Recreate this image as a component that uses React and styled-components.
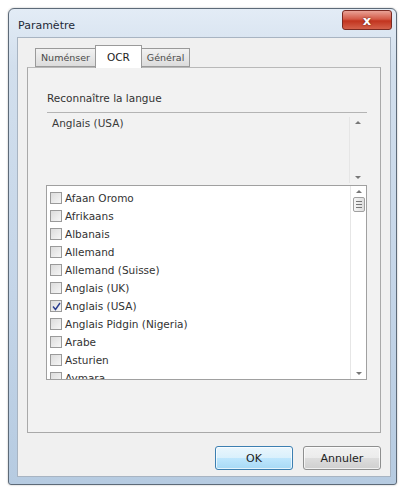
import React from 'react'
import styled, { createGlobalStyle } from 'styled-components'

const Global = createGlobalStyle`
  html, body { margin: 0; padding: 0; background: #ffffff; }
  body { font-family: Tahoma, "DejaVu Sans", "Liberation Sans", sans-serif; }
  * { box-sizing: border-box; }
`;

const languages = [
  { name: 'Afaan Oromo' },
  { name: 'Afrikaans' },
  { name: 'Albanais' },
  { name: 'Allemand' },
  { name: 'Allemand (Suisse)' },
  { name: 'Anglais (UK)' },
  { name: 'Anglais (USA)', checked: true },
  { name: 'Anglais Pidgin (Nigeria)' },
  { name: 'Arabe' },
  { name: 'Asturien' },
  { name: 'Aymara' },
];

const Page = styled.div`
  width: 404px;
  height: 490px;
  padding: 8px 7px 5px 8px;
  background: #fff;
`;

const Window = styled.div`
  height: 100%;
  display: flex;
  flex-direction: column;
  border: 1px solid #5d6a78;
  border-radius: 6px 6px 3px 3px;
  background: linear-gradient(180deg, #e3ecf6 0%, #d2dfed 12%, #c4d5e8 60%, #b6cbe1 100%);
  padding: 0 5px 7px 8px;
  box-shadow: 0 0 2px rgba(0, 0, 0, 0.3);
`;

const TitleBar = styled.div`
  height: 33px;
  display: flex;
  align-items: center;
  justify-content: space-between;
  padding-left: 1px;
`;

const Title = styled.span`
  font-size: 11px;
  color: #1e2a38;
  margin-top: 5px;
`;

const CloseBtn = styled.div`
  align-self: flex-start;
  width: 50px;
  height: 20px;
  margin-top: 1px;
  margin-right: -1px;
  border: 1px solid #7a2a22;
  border-radius: 3px;
  background: linear-gradient(180deg, #e9a296 0%, #d45a47 45%, #c2341f 55%, #d4614b 100%);
  display: flex;
  align-items: center;
  justify-content: center;
  color: #fff;
  font: bold 13px "DejaVu Sans", sans-serif;
  text-shadow: 0 0 2px #5a1a10;
`;

const Client = styled.div`
  flex: 1;
  display: flex;
  flex-direction: column;
  background: #f0f0f0;
  border: 1px solid #a8b4c2;
  padding: 6px 9px 6px 9px;
`;

const Tabs = styled.div`
  display: flex;
  align-items: flex-end;
  padding-left: 8px;
  height: 23px;
`;

const Tab = styled.div`
  height: ${p => (p.$active ? '23px' : '19px')};
  padding: 0 ${p => (p.$active ? '11px' : '5px')};
  font-size: ${p => (p.$active ? '10.5px' : '9.5px')};
  display: flex;
  align-items: center;
  color: ${p => (p.$active ? '#222' : '#4a4a4a')};
  background: ${p => (p.$active ? '#ffffff' : 'linear-gradient(180deg, #f2f2f2, #dcdcdc)')};
  border: 1px solid #9a9a9a;
  border-bottom: ${p => (p.$active ? 'none' : '1px solid #9a9a9a')};
  margin-bottom: ${p => (p.$active ? '-1px' : '0')};
  position: relative;
  z-index: ${p => (p.$active ? 2 : 1)};
  & + & { margin-left: -1px; }
`;

const Panel = styled.div`
  height: 366px;
  border: 1px solid #a9a9a9;
  border-top-color: #b9b9b9;
  background: #f2f2f2;
  padding: 24px 13px 0 19px;
`;

const Label = styled.div`
  font-size: 10.5px;
  color: #333;
  margin-bottom: 8px;
`;

const Selected = styled.div`
  height: 73px;
  border-top: 1px solid #b4b4b4;
  display: flex;
  justify-content: space-between;
  padding: 4px 2px 0 5px;
  font-size: 10.5px;
  color: #3a3a3a;
`;

const ScrollBar = styled.div`
  width: 16px;
  display: flex;
  flex-direction: column;
  justify-content: space-between;
  align-items: center;
  padding: 4px 0 4px;
  border-left: 1px solid #e6e6e6;
  margin-bottom: ${p => (p.$inset ? '0' : '2px')};
`;

const ArrowCol = styled.div`
  display: flex;
  flex-direction: column;
  align-items: center;
`;

const Arrow = styled.span`
  width: 0;
  height: 0;
  border-left: 3px solid transparent;
  border-right: 3px solid transparent;
  ${p => (p.$down ? 'border-top: 3px solid #777;' : 'border-bottom: 3px solid #777;')}
`;

const Thumb = styled.div`
  width: 12px;
  height: 15px;
  border: 1px solid #a0a0a0;
  border-radius: 2px;
  background: linear-gradient(90deg, #f6f6f6, #dedede);
  display: flex;
  flex-direction: column;
  justify-content: center;
  align-items: center;
  gap: 2px;
  margin-top: 4px;
  & > i { display: block; width: 6px; height: 1px; background: #777; }
`;

const ListBox = styled.div`
  height: 195px;
  margin-left: -1px;
  background: #fff;
  border: 1px solid #a0a0a0;
  display: flex;
  overflow: hidden;
`;

const Items = styled.div`
  flex: 1;
  padding: 3px 0 0 3px;
`;

const Item = styled.div`
  height: 18px;
  display: flex;
  align-items: center;
  gap: 3px;
  font-size: 10.5px;
  color: #333;
`;

const Check = styled.span`
  width: 12px;
  height: 12px;
  border: 1px solid #9a9a9a;
  background: linear-gradient(135deg, #dcdcdc, #f6f6f6);
  display: flex;
  align-items: center;
  justify-content: center;
`;

const Footer = styled.div`
  display: flex;
  justify-content: flex-end;
  gap: 10px;
  padding: 13px 0 0;
`;

const Button = styled.div`
  width: 78px;
  height: 24px;
  border: 1px solid ${p => (p.$default ? '#3c7fb1' : '#8e8f8f')};
  border-radius: 3px;
  background: ${p => (p.$default
    ? 'linear-gradient(180deg, #eaf6fd 0%, #d9f0fc 50%, #bee6fd 51%, #a7d9f5 100%)'
    : 'linear-gradient(180deg, #f2f2f2 0%, #ebebeb 50%, #dddddd 51%, #cfcfcf 100%)')};
  box-shadow: inset 0 0 0 1px rgba(255,255,255,0.7);
  display: flex;
  align-items: center;
  justify-content: center;
  font-size: 11px;
  color: #222;
`;

export default function App() {
  return (
    <Page>
      <Global />
      <Window>
        <TitleBar>
          <Title>Paramètre</Title>
          <CloseBtn>x</CloseBtn>
        </TitleBar>
        <Client>
          <Tabs>
            <Tab>Numénser</Tab>
            <Tab $active>OCR</Tab>
            <Tab>Général</Tab>
          </Tabs>
          <Panel>
            <Label>Reconnaître la langue</Label>
            <Selected>
              <span>Anglais (USA)</span>
              <ScrollBar>
                <Arrow />
                <Arrow $down />
              </ScrollBar>
            </Selected>
            <ListBox>
              <Items>
                {languages.map(l => (
                  <Item key={l.name}>
                    <Check>
                      {l.checked && (
                        <svg width="9" height="9" viewBox="0 0 9 9">
                          <path d="M1 4.5 L3.5 7.5 L8 1" fill="none" stroke="#2a3d8f" strokeWidth="1.4" />
                        </svg>
                      )}
                    </Check>
                    {l.name}
                  </Item>
                ))}
              </Items>
              <ScrollBar $inset>
                <ArrowCol>
                  <Arrow />
                  <Thumb><i /><i /><i /></Thumb>
                </ArrowCol>
                <Arrow $down />
              </ScrollBar>
            </ListBox>
          </Panel>
          <Footer>
            <Button $default>OK</Button>
            <Button>Annuler</Button>
          </Footer>
        </Client>
      </Window>
    </Page>
  );
}
